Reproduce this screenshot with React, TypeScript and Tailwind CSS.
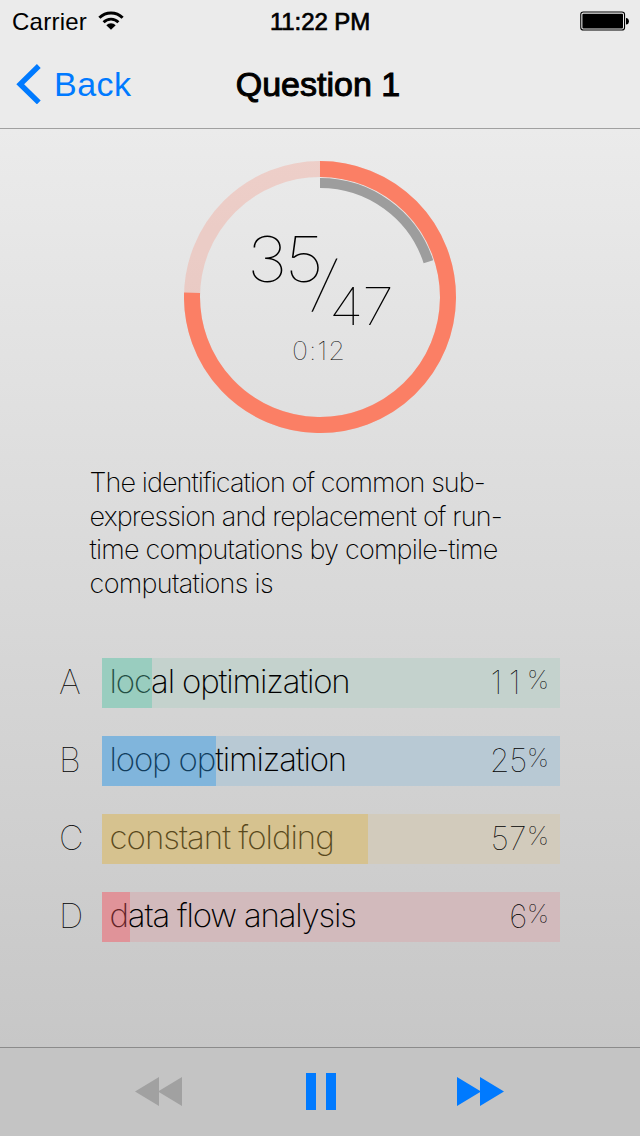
type Answer = {
  letter: string;
  text: string;
  percent: number;
  fill: number;
  track: string;
  bar: string;
  tracking: string;
  digits: string;
};

const answers: Answer[] = [
  { letter: "A", text: "local optimization", percent: 11, fill: 50, track: "bg-[#c4d2cd]", bar: "bg-[#5bc6aa]/40", tracking: "tracking-[-1.17px]", digits: "tracking-[6.5px]" },
  { letter: "B", text: "loop optimization", percent: 25, fill: 114, track: "bg-[#b8c9d4]", bar: "bg-[#2c99e8]/40", tracking: "tracking-[-1.17px]", digits: "tracking-[-0.3px]" },
  { letter: "C", text: "constant folding", percent: 57, fill: 266, track: "bg-[#d2cbbc]", bar: "bg-[#dcb54c]/40", tracking: "tracking-[-1px]", digits: "tracking-[0.4px]" },
  { letter: "D", text: "data flow analysis", percent: 6, fill: 28, track: "bg-[#d2babc]", bar: "bg-[#f55b65]/40", tracking: "tracking-[-1.17px]", digits: "tracking-[-0.3px]" },
];

const lines: { text: string; tracking: string }[] = [
  { text: "The identification of common sub-", tracking: "tracking-[-0.92px]" },
  { text: "expression and replacement of run-", tracking: "tracking-[-0.86px]" },
  { text: "time computations by compile-time", tracking: "tracking-[-0.79px]" },
  { text: "computations is", tracking: "tracking-[-0.7px]" },
];

function StatusBar() {
  return (
    <div className="grid h-10 grid-cols-3 items-center text-2xl leading-10">
      <div className="flex items-center gap-[11px] pl-3">
        <span className="pt-0.5 tracking-[0.25px]">Carrier</span>
        <svg width="26" height="20" viewBox="0 0 26 20" fill="none" stroke="#000">
          <path d="M1.4 6.8A16.2 16.2 0 0 1 24.6 6.8" strokeWidth="3" />
          <path d="M5.6 11.2A10.3 10.3 0 0 1 20.4 11.2" strokeWidth="2.8" />
          <path d="M8.3 14.2A6.6 6.6 0 0 1 17.7 14.2L13 18.8Z" fill="#000" stroke="none" />
        </svg>
      </div>
      <div className="pt-0.5 text-center tracking-[-0.1px] [-webkit-text-stroke:0.7px_#000]">11:22 PM</div>
      <div className="flex justify-end pr-2.5">
        <svg width="50" height="20" viewBox="0 0 50 20">
          <rect x="0.75" y="1" width="43.8" height="18" rx="2.6" fill="none" stroke="#000" strokeWidth="1.1" />
          <rect x="2.4" y="2.8" width="40.6" height="14.6" rx="1" />
          <path d="M46 7Q48.9 7.2 48.9 10.3T46 13.6Z" />
        </svg>
      </div>
    </div>
  );
}

function NavBar() {
  return (
    <div className="grid h-[88px] grid-cols-3 items-center text-[34px] leading-10">
      <div className="flex items-center gap-[13px] pl-4 text-[#007aff]">
        <svg width="25" height="40" viewBox="0 0 25 40" fill="none" stroke="currentColor" strokeWidth="5.4">
          <path d="M22.8 2L4.2 20.2L22.8 38.4" />
        </svg>
        <span className="tracking-[0.5px]">Back</span>
      </div>
      <div className="whitespace-nowrap pr-1 text-center [-webkit-text-stroke:1px_#000]">Question 1</div>
    </div>
  );
}

function Ring() {
  return (
    <div className="relative size-[272px]">
      <svg width="272" height="272" viewBox="0 0 272 272" fill="none">
        <circle cx="136" cy="136" r="128" stroke="#ff6347" strokeOpacity="0.2" strokeWidth="16" />
        <path d="M136 8A128 128 0 1 1 8.06 131.8" stroke="#fb7f65" strokeWidth="16" />
        <path d="M136 22A114 114 0 0 1 244.4 100.7" stroke="#9d9d9d" strokeWidth="10" />
      </svg>
      <div className="absolute left-[63px] top-[66px] origin-left scale-x-[1.1] text-[63px] font-thin leading-[64px] tracking-[-2.4px]">35</div>
      <div className="absolute left-[131px] top-[90px] -skew-x-[11deg] text-[61px] font-thin leading-[64px]">/</div>
      <div className="absolute left-[145px] top-[114px] origin-left scale-x-[1.11] text-[52px] font-thin leading-[64px] tracking-[-1px]">47</div>
      <div className="absolute left-[108px] top-[174px] origin-left scale-x-[1.04] text-[26px] font-thin leading-[32px] tracking-[1px]">0:12</div>
    </div>
  );
}

function Row({ a }: { a: Answer }) {
  return (
    <div className="flex h-[50px] items-center">
      <div className="w-[44px] pb-0.5 pl-px text-[34px] font-thin leading-[50px]">{a.letter}</div>
      <div className={`relative flex h-[50px] w-[458px] justify-between pl-[7.5px] pr-3 ${a.track}`}>
        <span className={`whitespace-nowrap text-[33px] font-extralight leading-[46px] ${a.tracking}`}>{a.text}</span>
        <span className="flex font-thin">
          <span className={`text-[32px] leading-[50px] ${a.digits}`}>{a.percent}</span>
          <span className="text-[26px] leading-[43px] tracking-[-1px]">%</span>
        </span>
        <div className={`absolute inset-y-0 left-0 ${a.bar}`} style={{ width: a.fill }} />
      </div>
    </div>
  );
}

export default function App() {
  return (
    <div className="flex h-[1136px] w-[640px] flex-col bg-[#ebebeb] text-black">
      <header className="h-[129px] border-b border-[#a0a0a0] font-['Liberation_Sans',sans-serif]">
        <StatusBar />
        <NavBar />
      </header>
      <main className="flex h-[918px] flex-col bg-linear-to-b from-[#ebebeb] to-[#c7c7c7] font-['Inter',sans-serif]">
        <div className="flex justify-center pt-8">
          <Ring />
        </div>
        <div className="flex flex-col pl-[89.6px] pt-[33px]">
          {lines.map((l) => (
            <div key={l.text} className={`h-[33.6px] whitespace-nowrap text-[27px] font-extralight leading-[33.6px] ${l.tracking}`}>
              {l.text}
            </div>
          ))}
        </div>
        <div className="flex flex-col gap-7 pl-[58px] pt-[57.6px]">
          {answers.map((a) => (
            <Row key={a.letter} a={a} />
          ))}
        </div>
      </main>
      <footer className="flex h-[89px] items-center justify-between border-t border-[#8b8b8b] bg-[#c4c4c4] pl-[135px] pr-[136px]">
        <svg width="47" height="30" viewBox="0 0 47 30" fill="#a1a1a1">
          <path d="M0 14.5L24 0V29ZM23 14.5L47 0V29Z" />
        </svg>
        <svg width="30" height="38" viewBox="0 0 30 38" fill="#007aff" className="ml-0.5">
          <path d="M0 0H10V37H0ZM20 0H30V37H20Z" />
        </svg>
        <svg width="47" height="30" viewBox="0 0 47 30" fill="#007aff">
          <path d="M0 0L24 14.5L0 29ZM23 0L47 14.5L23 29Z" />
        </svg>
      </footer>
    </div>
  );
}
